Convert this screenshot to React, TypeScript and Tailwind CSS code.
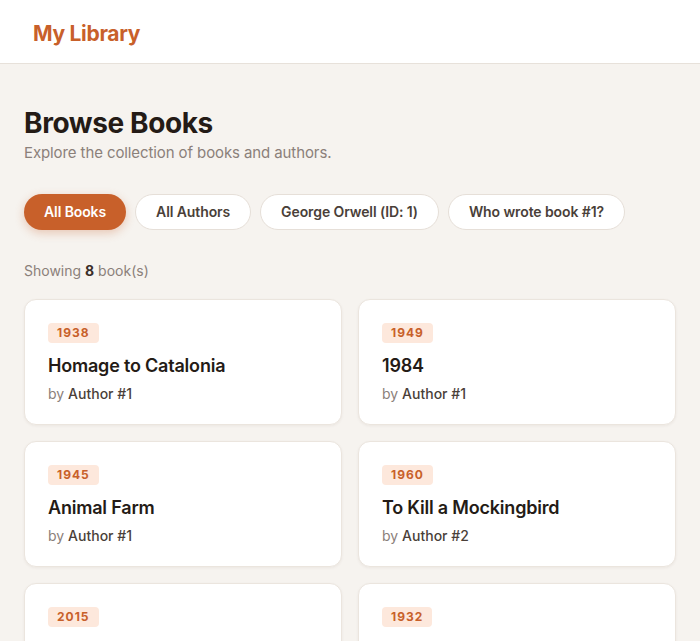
import React from "react";

type Book = { year: number; title: string; author: number };

const books: Book[] = [
  { year: 1938, title: "Homage to Catalonia", author: 1 },
  { year: 1949, title: "1984", author: 1 },
  { year: 1945, title: "Animal Farm", author: 1 },
  { year: 1960, title: "To Kill a Mockingbird", author: 2 },
  { year: 2015, title: "Go Set a Watchman", author: 2 },
  { year: 1932, title: "Brave New World", author: 3 },
  { year: 1954, title: "The Doors of Perception", author: 3 },
  { year: 1962, title: "Island", author: 3 },
];

const filters = ["All Books", "All Authors", "George Orwell (ID: 1)", "Who wrote book #1?"];

export default function App() {
  return (
    <div
      className="min-h-screen bg-[#f6f3ef] text-[#2a1f1a]"
      style={{ fontFamily: "Inter, 'Noto Sans', sans-serif" }}
    >
      <header className="h-16 bg-white border-b border-[#e7e1da] flex items-center px-[33px] pt-1">
        <span className="text-[21px] font-bold text-[#c8602a] tracking-[-0.3px]">My Library</span>
      </header>

      <main className="px-6 pt-[41px]">
        <h1 className="text-[28px] leading-[36px] font-bold tracking-[-0.4px] text-[#241b16]">Browse Books</h1>
        <p className="mt-[1px] text-[15px] tracking-[-0.1px] text-[#8b807a]">Explore the collection of books and authors.</p>

        <div className="mt-[29px] flex gap-[9px]">
          {filters.map((f, i) =>
            i === 0 ? (
              <button
                key={f}
                className="h-9 px-5 rounded-full bg-[#c8602a] text-white text-sm font-semibold tracking-[-0.1px] shadow-[0_3px_10px_rgba(200,96,42,0.3)]"
              >
                {f}
              </button>
            ) : (
              <button
                key={f}
                className="h-9 px-5 rounded-full bg-white border border-[#e6dfd8] text-[#4a3f39] text-sm font-semibold tracking-[-0.1px]"
              >
                {f}
              </button>
            )
          )}
        </div>

        <p className="mt-[31px] text-sm text-[#8b807a]">
          Showing <span className="font-bold text-[#3a2f29]">8</span> book(s)
        </p>

        <div className="mt-[18px] grid grid-cols-2 gap-4">
          {books.map((b) => (
            <div
              key={b.title}
              className="h-[126px] flex flex-col items-start bg-white rounded-xl border border-[#ebe5de] shadow-[0_1px_3px_rgba(60,40,20,0.06)] px-[23px] pt-[23px]"
            >
              <span className="rounded bg-[#fde8dc] text-[#c8602a] text-xs leading-4 font-bold tracking-[1px] px-[9px] py-[2px]">
                {b.year}
              </span>
              <h3 className="mt-[9px] text-lg font-semibold text-[#241b16] leading-7 tracking-[-0.2px]">{b.title}</h3>
              <p className="mt-[4px] text-sm leading-5 text-[#8b807a]">
                by <span className="font-medium text-[#4a3f39]">Author #{b.author}</span>
              </p>
            </div>
          ))}
        </div>
      </main>
    </div>
  );
}
